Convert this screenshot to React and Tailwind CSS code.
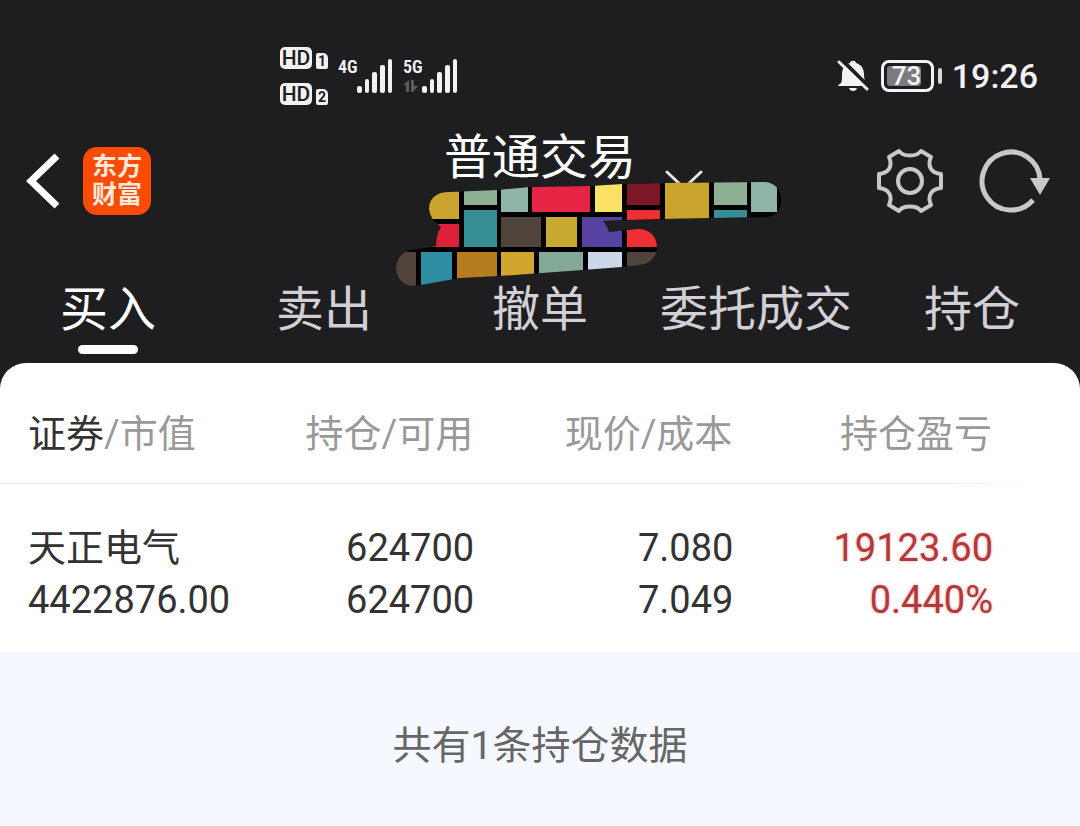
import React, { useState } from "react";

const tabs = ["买入", "卖出", "撤单", "委托成交", "持仓"];

const holdings = [
  {
    name: "天正电气",
    marketValue: "4422876.00",
    amount: "624700",
    available: "624700",
    price: "7.080",
    cost: "7.049",
    profit: "19123.60",
    profitRate: "0.440%",
  },
];

// x, y, width, height, color
const tiles = [
  [429, 180, 30, 39, "#cba430"],
  [429, 224, 30, 23, "#dc2138"],
  [464, 180, 33, 25, "#8fb193"],
  [464, 210, 33, 37, "#378f96"],
  [501, 180, 27, 32, "#8fb5a8"],
  [501, 217, 40, 30, "#4f433b"],
  [532, 180, 58, 32, "#e62443"],
  [546, 217, 31, 30, "#caa931"],
  [582, 217, 40, 30, "#5642a0"],
  [595, 180, 27, 32, "#fde066"],
  [627, 180, 33, 25, "#7b1728"],
  [627, 210, 33, 37, "#ee3034"],
  [665, 180, 44, 39, "#c9a32c"],
  [714, 180, 33, 25, "#8fb193"],
  [714, 210, 33, 12, "#378f96"],
  [751, 180, 26, 32, "#8fb5a8"],
  [396, 252, 20, 36, "#50433c"],
  [421, 252, 31, 36, "#2d8da2"],
  [457, 252, 40, 36, "#b67c20"],
  [501, 252, 33, 36, "#d0a62f"],
  [539, 252, 44, 36, "#84aa97"],
  [588, 252, 34, 36, "#ccd8e7"],
  [627, 252, 30, 36, "#50433c"],
];

function HdBadge({ slot }) {
  return (
    <div className="flex items-end gap-1">
      <span className="flex h-[22px] w-8 items-center justify-center rounded-[5px] bg-[#f2f2f4] text-[21px] leading-[22px] font-medium text-[#1e1d20]">
        HD
      </span>
      <span className="flex h-4 w-3 items-center justify-center rounded-[2px] rounded-tr-[5px] bg-[#f2f2f4] text-sm leading-4 font-bold text-[#1e1d20]">
        {slot}
      </span>
    </div>
  );
}

function SignalBars() {
  return (
    <svg width="36" height="34" viewBox="0 0 36 34" fill="#f2f2f4" aria-hidden="true">
      <rect x="0" y="27" width="5" height="7" rx="2" />
      <rect x="8" y="20" width="4" height="14" rx="2" />
      <rect x="15" y="13" width="5" height="21" rx="2" />
      <rect x="23" y="6" width="5" height="28" rx="2" />
      <rect x="31" y="0" width="4" height="34" rx="2" />
    </svg>
  );
}

function Network({ label, active }) {
  return (
    <div className="flex h-[34px]">
      <div className="flex w-[19px] flex-col">
        <span className="font-['Roboto_Condensed','Liberation_Sans_Narrow',Roboto,sans-serif] text-lg leading-4 font-semibold">
          {label}
        </span>
        {active && (
          <svg className="mt-1" width="17" height="14" viewBox="0 0 17 14" fill="#5a595c" aria-hidden="true">
            <path d="M0 6L6 1v12H3V6z" />
            <path d="M8 1h3v6h4l-5 6H8z" />
          </svg>
        )}
      </div>
      <SignalBars />
    </div>
  );
}

function StatusBar() {
  return (
    <div className="flex h-28 items-center justify-between pt-10 pr-[42px] pl-[280px] text-[#f2f2f4]">
      <div className="flex items-center">
        <div className="flex flex-col gap-[14px]">
          <HdBadge slot="1" />
          <HdBadge slot="2" />
        </div>
        <div className="flex gap-[10px] pl-[10px]">
          <Network label="4G" />
          <Network label="5G" active />
        </div>
      </div>

      <div className="flex items-center">
        <svg width="32" height="34" viewBox="0 0 32 34" aria-hidden="true">
          <path
            d="M4 24C5 22 5 20 5 16 5 9 8 5 13 4 13 1 19 1 19 4 25 6 27 10 27 16 27 20 28 23 30 25V27H1C1 26 3 25 4 24Z"
            fill="#f2f2f4"
          />
          <path d="M12 29h8c-1 4-7 4-8 0z" fill="#f2f2f4" />
          <path d="M4 0l29 29" stroke="#1e1d20" strokeWidth="4" />
          <path d="M2 3l28 27" stroke="#f2f2f4" strokeWidth="3" strokeLinecap="round" />
        </svg>
        <div className="ml-3 flex h-8 w-[53px] items-center rounded-[8px] border-[3px] border-[#f2f2f4] p-[3px]">
          <div className="flex h-full w-[34px] items-center rounded-[3px] bg-[#7b7a7d] pl-[5px] text-[26px] font-medium">
            73
          </div>
        </div>
        <div className="ml-1 h-4 w-1 rounded-full bg-[#d8d8da]" />
        <span className="ml-[10px] text-[34px] font-medium">19:26</span>
      </div>
    </div>
  );
}

function Scribble() {
  return (
    <svg
      className="pointer-events-none absolute top-17 left-1/2 z-10 -translate-x-36"
      width="386"
      height="108"
      viewBox="396 180 386 108"
      aria-hidden="true"
    >
      <clipPath id="scribble">
        <path d="M429 209C429 198 437 192 449 192L497 190 530 187 590 186 622 184 664 183 764 182C775 182 781 190 781 200 781 211 774 217 765 217L713 218 660 219 626 220 603 221Q607 225 609 232L626 230 639 229C650 229 657 237 657 247 657 257 650 264 640 265L622 267 583 270 500 276 460 278 421 285 413 286C403 286 396 278 396 268 396 258 403 251 411 250L425 248 436 246Q436 234 441 227 430 220 429 209Z" />
      </clipPath>
      <g clipPath="url(#scribble)">
        <rect x="396" y="180" width="386" height="108" fill="#000" />
        {tiles.map(([x, y, w, h, color]) => (
          <rect key={`${x}-${y}`} x={x} y={y} width={w} height={h} fill={color} />
        ))}
      </g>
    </svg>
  );
}

function NavBar() {
  return (
    <div className="relative grid h-[138px] grid-cols-[1fr_auto_1fr] items-center pr-[30px] pl-[26px]">
      <div className="flex items-center gap-[23px]">
        <button type="button" aria-label="返回" className="cursor-pointer">
          <svg width="34" height="58" viewBox="0 0 34 58" fill="none" stroke="#fff" strokeWidth="7">
            <path d="M31 4L5 29l26 25" />
          </svg>
        </button>
        <div className="flex size-[68px] flex-col items-center justify-center rounded-[14px] bg-[#fb4b05] text-[25px] leading-7 font-bold text-[#ffe9d8]">
          <span>东方</span>
          <span>财富</span>
        </div>
      </div>

      <button type="button" className="mb-[46px] flex cursor-pointer items-end gap-7 pl-[72px] text-white">
        <h1 className="text-5xl leading-[64px] font-normal">普通交易</h1>
        <svg width="40" height="20" viewBox="0 0 40 20" fill="none" stroke="#e4e4e6" strokeWidth="3" strokeLinecap="round">
          <path d="M3 2l17 16L37 2" />
        </svg>
      </button>

      <div className="flex items-center justify-end gap-9">
        <button type="button" aria-label="设置" className="cursor-pointer">
          <svg width="66" height="66" viewBox="0 0 66 66" fill="none" stroke="#c8c8ca" strokeWidth="4">
            <path
              d="M22 3C26 9 40 9 44 3L54 9C50 18 54 25 64 26V40C54 41 50 48 54 57L44 63C40 57 26 57 22 63L12 57C16 48 12 41 2 40V26C12 25 16 18 12 9Z"
              strokeLinejoin="round"
            />
            <circle cx="33" cy="33" r="12" />
          </svg>
        </button>
        <button type="button" aria-label="刷新" className="cursor-pointer">
          <svg width="71" height="66" viewBox="0 0 71 66" fill="none" stroke="#c8c8ca" strokeWidth="5">
            <path d="M61 31A29 29 0 1 0 54 52" />
            <path d="M51 30h20L61 47z" fill="#c8c8ca" stroke="none" />
          </svg>
        </button>
      </div>
      <Scribble />
    </div>
  );
}

function Tabs() {
  const [active, setActive] = useState("买入");

  return (
    <nav className="grid grid-cols-5">
      {tabs.map((tab) => (
        <button
          key={tab}
          type="button"
          onClick={() => setActive(tab)}
          className={`flex cursor-pointer flex-col items-center pt-[25px] pb-[9px] text-5xl leading-[70px] whitespace-nowrap ${
            active === tab ? "text-white" : "text-[#d2d0d4]"
          }`}
        >
          {tab}
          <span className={`h-[9px] w-[60px] rounded-full ${active === tab ? "bg-white" : ""}`} />
        </button>
      ))}
    </nav>
  );
}

function Holdings() {
  return (
    <table className="w-full table-fixed text-[38px] leading-[52px] text-[#333]">
      <colgroup>
        <col className="w-[25%]" />
        <col className="w-[19%]" />
        <col className="w-[24%]" />
        <col className="w-[32%]" />
      </colgroup>
      <thead>
        <tr className="h-[121px] bg-[linear-gradient(to_right,#e8e8e8_85%,transparent_97%)] bg-[length:100%_1px] bg-bottom bg-no-repeat text-right whitespace-nowrap text-[#999]">
          <th className="pt-[20px] pl-7 text-left font-normal">
            <span className="text-[#333]">证券</span>/市值
          </th>
          <th className="pt-[20px] pr-[2px] font-normal">持仓/可用</th>
          <th className="pt-[20px] pr-[2px] font-normal">现价/成本</th>
          <th className="pt-[20px] pr-[88px] font-normal">持仓盈亏</th>
        </tr>
      </thead>
      <tbody>
        {holdings.map((item) => (
          <tr key={item.name} className="h-[168px] text-right">
            <td className="pt-[12px] pl-7 text-left">
              <div>{item.name}</div>
              <div>{item.marketValue}</div>
            </td>
            <td className="pt-[12px] pr-[1px]">
              <div>{item.amount}</div>
              <div>{item.available}</div>
            </td>
            <td className="pt-[12px] pr-[1px]">
              <div>{item.price}</div>
              <div>{item.cost}</div>
            </td>
            <td className="pt-[12px] pr-[87px] text-[#b03a3a] [text-shadow:0_0_3px_#ff9c9c]">
              <div>{item.profit}</div>
              <div>{item.profitRate}</div>
            </td>
          </tr>
        ))}
      </tbody>
    </table>
  );
}

function App() {
  return (
    <div className="flex min-h-screen flex-col bg-[#f5f9ff] font-[Roboto,'Noto_Sans_CJK_SC',sans-serif]">
      <div className="bg-[#1e1d20]">
        <header>
          <StatusBar />
          <NavBar />
          <Tabs />
        </header>
        <main className="rounded-t-[26px] bg-white">
          <Holdings />
        </main>
      </div>
      <p className="pt-[68px] pb-12 text-center text-[39px] leading-[52px] text-[#666]">
        共有{holdings.length}条持仓数据
      </p>
    </div>
  );
}

export default App;
